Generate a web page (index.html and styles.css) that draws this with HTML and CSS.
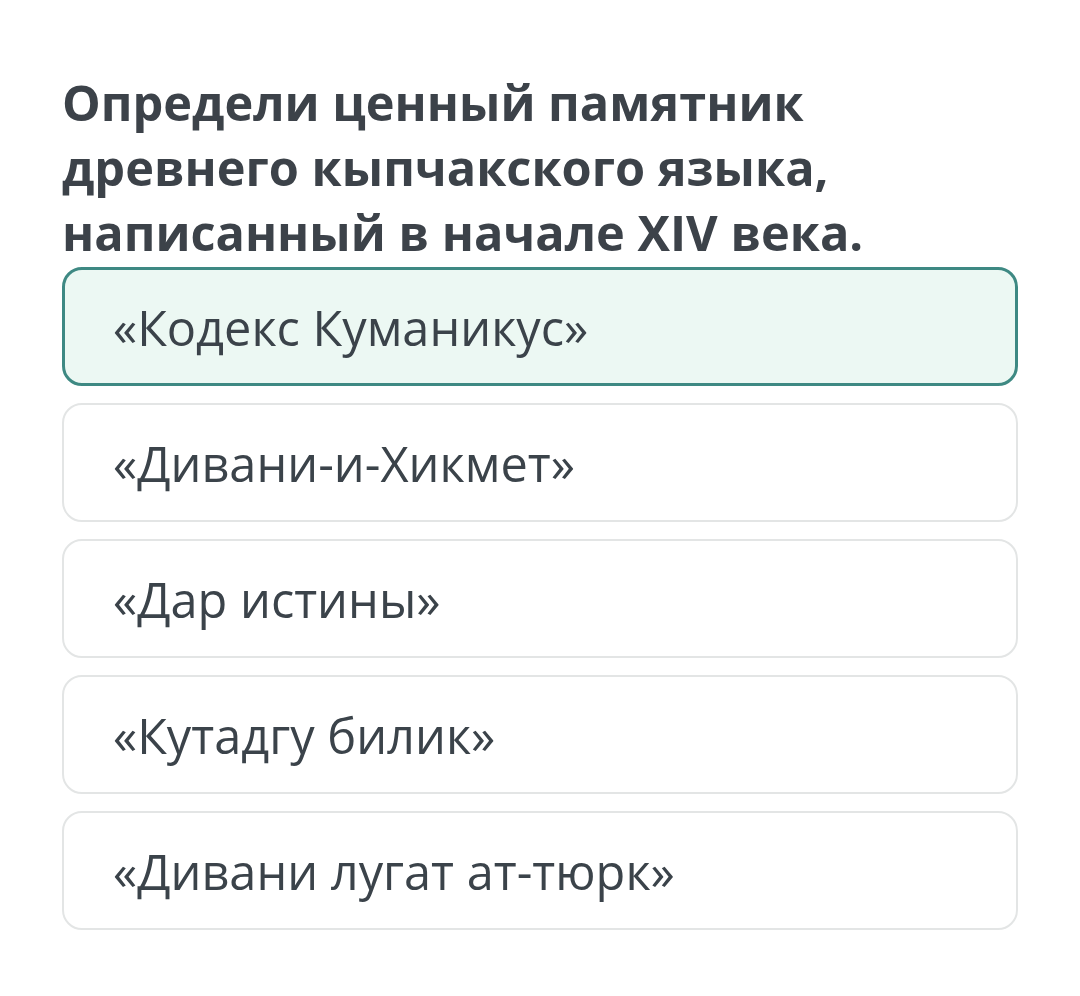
FILE: index.html
```html
<!DOCTYPE html>
<html lang="ru">
<head>
<meta charset="utf-8">
<link rel="stylesheet" href="styles.css">
</head>
<body>
<main class="quiz">
  <h1 class="question">Определи ценный памятник древнего кыпчакского языка, написанный в начале XIV века.</h1>
  <ul class="options">
    <li class="option selected">«Кодекс Куманикус»</li>
    <li class="option">«Дивани-и-Хикмет»</li>
    <li class="option">«Дар истины»</li>
    <li class="option">«Кутадгу билик»</li>
    <li class="option">«Дивани лугат ат-тюрк»</li>
  </ul>
</main>
</body>
</html>
```
FILE: styles.css
```css
html, body {
  margin: 0;
  padding: 0;
  background: #ffffff;
}
body {
  font-family: "Open Sans", "Noto Sans", sans-serif;
  color: #3b4249;
}
.quiz {
  padding: 70px 62px 0 62px;
}
.question {
  margin: 0;
  font-size: 48.7px;
  font-weight: 700;
  line-height: 65px;
  color: #3c4249;
  width: 900px;
}
.options {
  list-style: none;
  margin: 2px 0 0 0;
  padding: 0;
  display: flex;
  flex-direction: column;
  gap: 17px;
}
.option {
  box-sizing: border-box;
  height: 119px;
  border: 2px solid #e3e5e5;
  border-radius: 20px;
  padding: 0 0 0 49px;
  display: flex;
  align-items: center;
  font-size: 48.7px;
  color: #3b434a;
}
.option.selected {
  border: 3px solid #3e8983;
  background: #ecf8f3;
  padding-left: 48px;
}
```
